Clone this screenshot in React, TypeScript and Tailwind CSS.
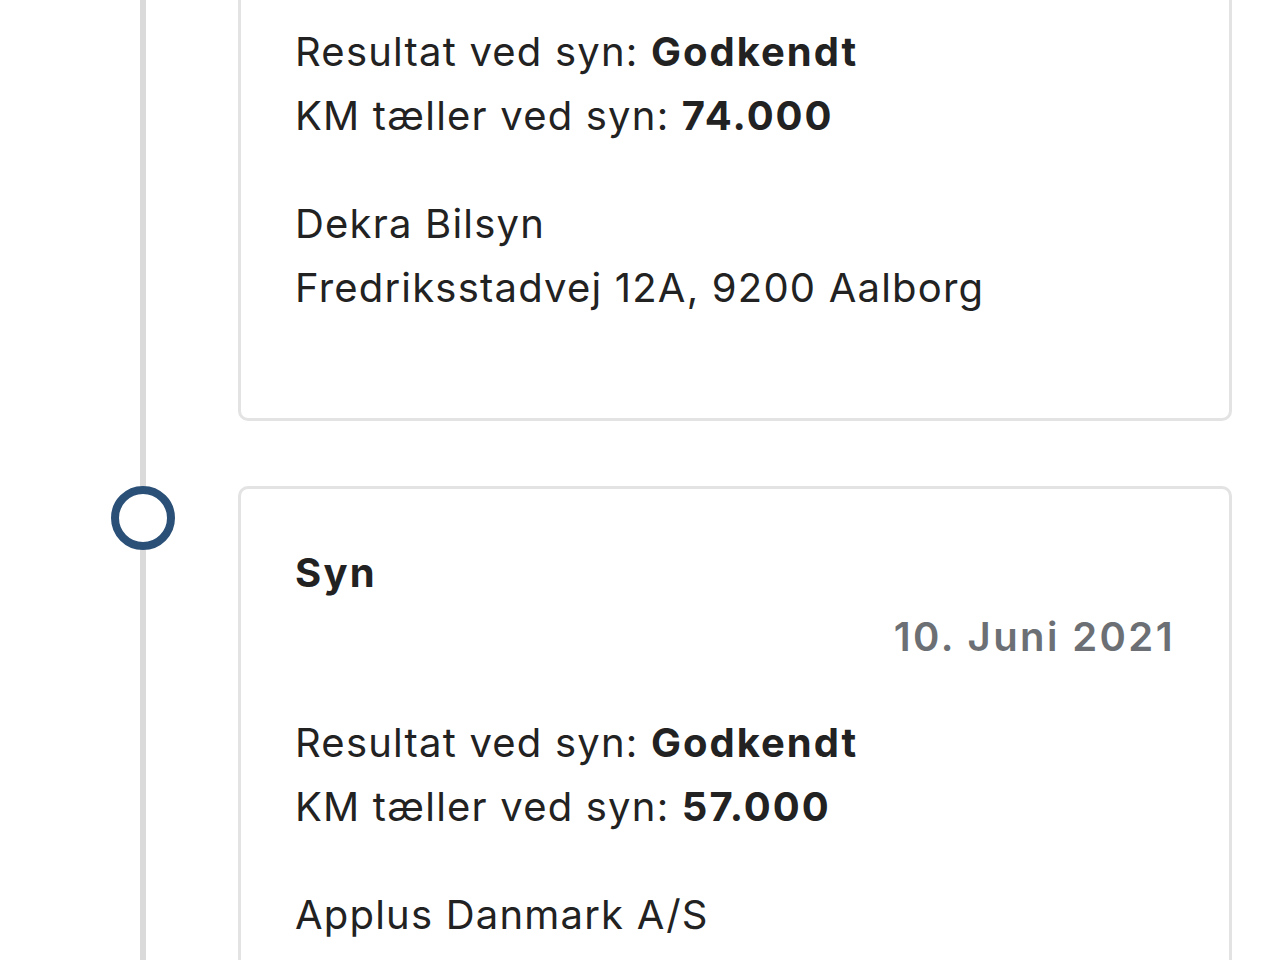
const INSPECTIONS = [
  {
    title: "Syn",
    date: "8. Juni 2023",
    result: "Godkendt",
    km: "74.000",
    place: "Dekra Bilsyn",
    address: "Fredriksstadvej 12A, 9200 Aalborg",
  },
  {
    title: "Syn",
    date: "10. Juni 2021",
    result: "Godkendt",
    km: "57.000",
    place: "Applus Danmark A/S",
    address: "Sofiendalsvej 5, 9200 Aalborg",
  },
];

type Inspection = (typeof INSPECTIONS)[number];

function InspectionCard({ item }: { item: Inspection }) {
  return (
    <div className="flex">
      <div className="relative w-[238px] shrink-0">
        <div className="absolute left-[111px] top-0 h-[64px] w-[64px] rounded-full border-[8px] border-[#2a5078] bg-white" />
      </div>
      <article className="w-[994px] rounded-[10px] border-[3px] border-[#e3e3e3] bg-white px-[54px] pb-[98px] pt-[52px]">
        <h3 className="font-bold tracking-[0.055em]">{item.title}</h3>
        <p className="text-right font-semibold tracking-[0.06em] text-[#6c7074]">{item.date}</p>
        <div className="mt-[42px]">
          <p>
            Resultat ved syn: <span className="font-bold tracking-[0.05em]">{item.result}</span>
          </p>
          <p>
            KM tæller ved syn: <span className="font-bold tracking-[0.05em]">{item.km}</span>
          </p>
        </div>
        <div className="mt-[44px]">
          <p>{item.place}</p>
          <p>{item.address}</p>
        </div>
      </article>
    </div>
  );
}

export default function App() {
  return (
    <div className="h-[960px] overflow-hidden bg-white font-['Inter','Noto_Sans',sans-serif] text-[40px] leading-[64px] tracking-[0.03em] text-[#222222]">
      <div className="relative -mt-[205px]">
        <div className="absolute bottom-0 left-[140px] top-0 w-[6px] bg-[#dadada]" />
        <div className="relative flex flex-col gap-[65px]">
          {INSPECTIONS.map((item, i) => (
            <InspectionCard key={i} item={item} />
          ))}
        </div>
      </div>
    </div>
  );
}
